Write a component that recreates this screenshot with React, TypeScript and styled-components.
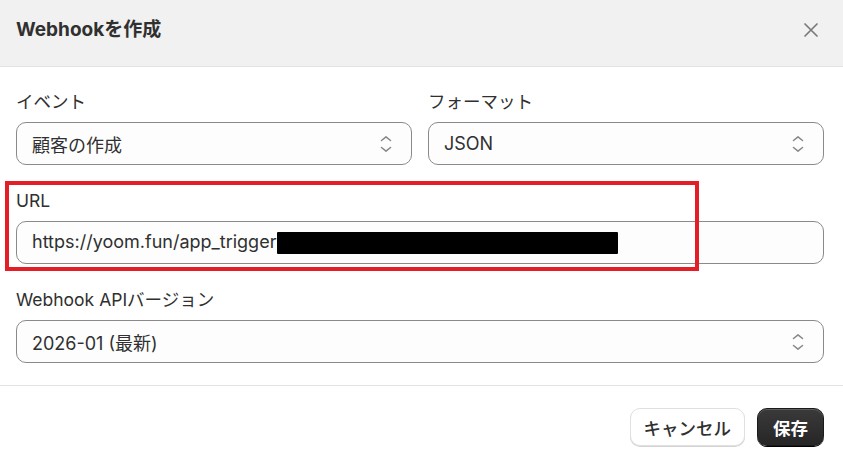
import React from "react";
import styled, { createGlobalStyle } from "styled-components";

const Global = createGlobalStyle`
  html, body { margin: 0; padding: 0; background: #ffffff; }
  body {
    font-family: Inter, "Noto Sans CJK JP", sans-serif;
    color: #303030;
    -webkit-font-smoothing: antialiased;
  }
  * { box-sizing: border-box; }
`;

const Dialog = styled.div`
  width: 843px;
  height: 461px;
  background: #ffffff;
  display: flex;
  flex-direction: column;
  overflow: hidden;
`;

const Header = styled.div`
  height: 67px;
  background: #f1f1f1;
  border-bottom: 1px solid #e3e3e3;
  display: flex;
  align-items: flex-start;
  justify-content: space-between;
  padding: 17px 19px 0 16px;
`;

const Title = styled.h2`
  margin: 0;
  font-size: 19px;
  line-height: 26px;
  font-weight: 700;
  color: #303030;
`;

const CloseButton = styled.button`
  width: 26px;
  height: 26px;
  border: none;
  background: transparent;
  padding: 0;
  display: flex;
  align-items: center;
  justify-content: center;
  cursor: pointer;
`;

const Body = styled.div`
  padding: 23px 19px 22px 16px;
  display: flex;
  flex-direction: column;
  gap: 24px;
  border-bottom: 1px solid #e3e3e3;
`;

const Row = styled.div`
  display: grid;
  grid-template-columns: 1fr 1fr;
  gap: 16px;
`;

const Field = styled.div`
  display: flex;
  flex-direction: column;
  gap: 8px;
  position: relative;
`;

const Label = styled.label`
  font-size: 17.5px;
  line-height: 24px;
  color: #303030;
`;

const Control = styled.div`
  height: 43px;
  border: 1px solid #8a8a8a;
  border-radius: 10px;
  background: #fdfdfd;
  display: flex;
  align-items: center;
  padding: 0 15px;
  font-size: 18px;
  color: #303030;
  white-space: nowrap;
  overflow: hidden;
`;

const Value = styled.span`
  flex: 1;
`;

const Redaction = styled.span`
  display: inline-block;
  width: 341px;
  height: 22px;
  background: #000000;
  vertical-align: middle;
  margin-left: 1px;
  border-radius: 1px;
`;

const Highlight = styled.div`
  position: absolute;
  left: -11px;
  top: -8px;
  width: 694px;
  height: 90px;
  border: 4px solid #e41e26;
  pointer-events: none;
`;

const Footer = styled.div`
  flex: 1;
  display: flex;
  justify-content: flex-end;
  align-items: flex-start;
  gap: 12px;
  padding: 22px 19px 0 16px;
`;

const Button = styled.button<{ $primary?: boolean }>`
  height: 38px;
  padding: 0 ${(p) => (p.$primary ? "15px" : "13px")};
  border-radius: 10px;
  font-family: Inter, "Noto Sans CJK JP", sans-serif;
  font-size: 17.5px;
  font-weight: ${(p) => (p.$primary ? 700 : 500)};
  color: ${(p) => (p.$primary ? "#ffffff" : "#303030")};
  background: ${(p) => (p.$primary ? "linear-gradient(#3a3a3a, #262626)" : "#ffffff")};
  border: 1px solid ${(p) => (p.$primary ? "#1a1a1a" : "#e0e0e0")};
  box-shadow: ${(p) =>
    p.$primary
      ? "inset 0 1px 0 rgba(255,255,255,0.18), 0 1px 0 #000"
      : "0 1px 0 #d4d4d4"};
  cursor: pointer;
`;

const Chevron = () => (
  <svg width="20" height="20" viewBox="0 0 20 20" fill="none">
    <path d="M5.5 6.5 L10 2.8 L14.5 6.5" stroke="#8a8a8a" strokeWidth="1.6" strokeLinecap="round" strokeLinejoin="round" />
    <path d="M5.5 13.5 L10 17.2 L14.5 13.5" stroke="#8a8a8a" strokeWidth="1.6" strokeLinecap="round" strokeLinejoin="round" />
  </svg>
);

const CloseIcon = () => (
  <svg width="16" height="16" viewBox="0 0 16 16" fill="none">
    <path d="M2 2 L14 14 M14 2 L2 14" stroke="#7a7a7a" strokeWidth="1.7" strokeLinecap="round" />
  </svg>
);

export default function App() {
  return (
    <>
      <Global />
      <Dialog>
        <Header>
          <Title>Webhookを作成</Title>
          <CloseButton aria-label="閉じる">
            <CloseIcon />
          </CloseButton>
        </Header>
        <Body>
          <Row>
            <Field>
              <Label>イベント</Label>
              <Control>
                <Value>顧客の作成</Value>
                <Chevron />
              </Control>
            </Field>
            <Field>
              <Label>フォーマット</Label>
              <Control>
                <Value>JSON</Value>
                <Chevron />
              </Control>
            </Field>
          </Row>
          <Field>
            <Label>URL</Label>
            <Control>
              <Value>
                https://yoom.fun/app_trigger
                <Redaction />
              </Value>
            </Control>
            <Highlight />
          </Field>
          <Field>
            <Label>Webhook APIバージョン</Label>
            <Control>
              <Value>2026-01 (最新)</Value>
              <Chevron />
            </Control>
          </Field>
        </Body>
        <Footer>
          <Button>キャンセル</Button>
          <Button $primary>保存</Button>
        </Footer>
      </Dialog>
    </>
  );
}
